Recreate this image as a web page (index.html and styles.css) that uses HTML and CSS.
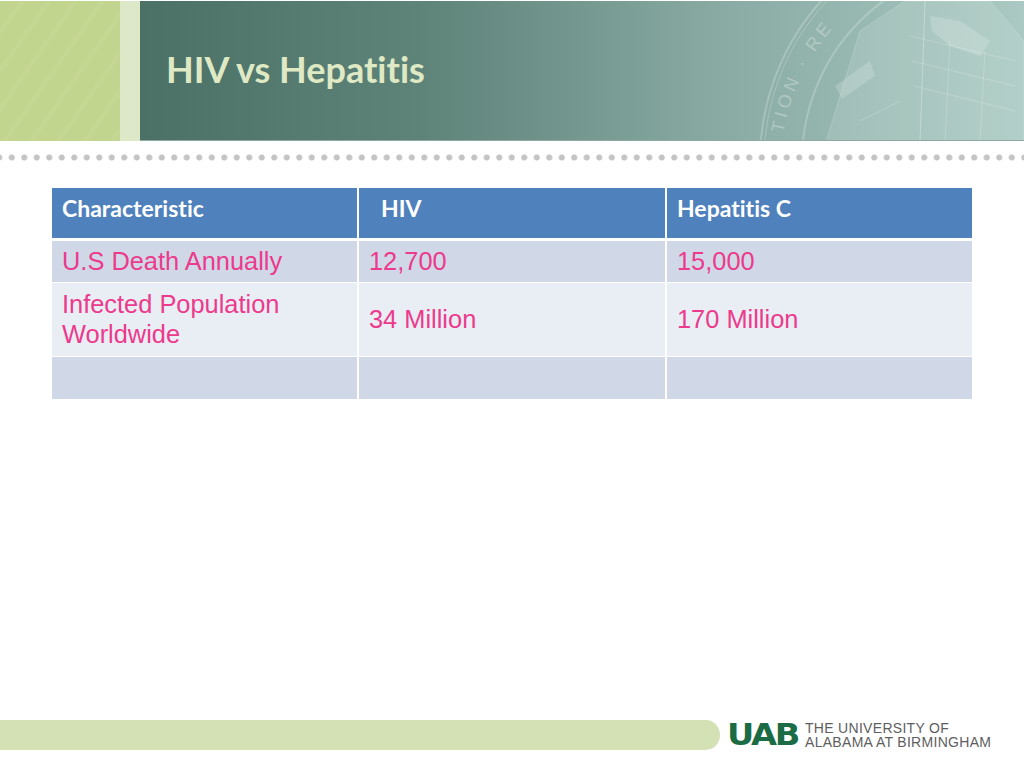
FILE: index.html
```html
<!DOCTYPE html>
<html lang="en">
<head>
<meta charset="utf-8">
<title>HIV vs Hepatitis</title>
<link rel="stylesheet" href="styles.css">
</head>
<body>
<div class="page">
  <header class="banner">
    <div class="banner-green"></div>
    <div class="banner-strip"></div>
    <div class="banner-main">
      <h1 class="title">HIV vs Hepatitis</h1>
      <svg class="seal" viewBox="680 0 344 141" width="344" height="141" aria-hidden="true">
        <defs>
          <path id="sealArc" d="M 780 170 A 220 220 0 0 1 1000 -50"/>
        </defs>
        <g fill="none" stroke="#ffffff" stroke-opacity="0.22" stroke-width="2">
          <circle cx="1000" cy="160" r="240"/>
          <circle cx="1000" cy="160" r="236" stroke-width="1"/>
          <circle cx="1000" cy="160" r="198"/>
        </g>
        <text class="seal-text"><textPath href="#sealArc" startOffset="11%">TION · RE</textPath></text>
        <g fill="#ffffff" fill-opacity="0.12" stroke="#ffffff" stroke-opacity="0.18" stroke-width="1">
          <polygon points="826,141 860,30 905,0 925,0 920,141"/>
          <polygon points="920,141 925,0 990,0 1024,40 1024,141"/>
        </g>
        <g fill="none" stroke="#ffffff" stroke-opacity="0.2" stroke-width="1">
          <line x1="910" y1="35" x2="1015" y2="60"/>
          <line x1="912" y1="60" x2="1015" y2="85"/>
          <line x1="914" y1="85" x2="1015" y2="110"/>
          <line x1="950" y1="40" x2="945" y2="141"/>
          <line x1="985" y1="50" x2="980" y2="141"/>
          <line x1="860" y1="120" x2="900" y2="100"/>
        </g>
        <g fill="#ffffff" fill-opacity="0.18">
          <polygon points="835,85 870,60 875,75 842,98"/>
          <polygon points="930,15 960,20 990,40 980,55 950,45 932,30"/>
        </g>
      </svg>
    </div>
  </header>

  <div class="dots"></div>

  <table class="data">
    <colgroup>
      <col class="c1"><col class="c2"><col class="c3">
    </colgroup>
    <thead>
      <tr>
        <th>Characteristic</th>
        <th class="indent">HIV</th>
        <th>Hepatitis C</th>
      </tr>
    </thead>
    <tbody>
      <tr class="odd short">
        <td>U.S Death Annually</td>
        <td>12,700</td>
        <td>15,000</td>
      </tr>
      <tr class="even tall">
        <td>Infected Population<br>Worldwide</td>
        <td>34 Million</td>
        <td>170 Million</td>
      </tr>
      <tr class="odd short">
        <td></td>
        <td></td>
        <td></td>
      </tr>
    </tbody>
  </table>

  <footer class="footer">
    <div class="band"></div>
    <div class="logo">
      <span class="logo-mark">UAB</span>
      <span class="logo-name">THE UNIVERSITY OF<br>ALABAMA AT BIRMINGHAM</span>
    </div>
  </footer>
</div>
</body>
</html>
```

FILE: styles.css
```css
html, body {
  margin: 0;
  padding: 0;
  background: #ffffff;
}

body {
  font-family: "Liberation Sans", Arial, sans-serif;
}

.page {
  display: flex;
  flex-direction: column;
  height: 768px;
  overflow: hidden;
}

/* ---------- banner ---------- */
.banner {
  display: flex;
  height: 140px;
  margin-top: 1px;
}

.banner-green {
  width: 120px;
  background-color: #c2d58e;
  background-image: repeating-linear-gradient(125deg,
      rgba(255,255,255,0) 0px,
      rgba(255,255,255,0) 14px,
      rgba(255,255,255,0.06) 18px,
      rgba(255,255,255,0) 22px);
}

.banner-strip {
  width: 20px;
  background: #dce8c7;
}

.banner-main {
  flex: 1;
  position: relative;
  overflow: hidden;
  background: linear-gradient(90deg, #4b7066 0%, #5e8379 32%, #89aba3 66%, #a9c9c2 100%);
  border-bottom: 1px solid #8ea8a2;
  box-sizing: border-box;
}

.title {
  position: relative;
  z-index: 1;
  margin: 0;
  padding: 47px 0 0 26px;
  font-family: Lato, "Open Sans", sans-serif;
  font-weight: 700;
  font-size: 36px;
  line-height: 1.2;
  color: #dfe9c4;
  font-variant-ligatures: none;
}

.seal {
  position: absolute;
  top: 0;
  right: 0;
}

.seal-text {
  font-family: "Liberation Sans", sans-serif;
  font-size: 18px;
  letter-spacing: 4px;
  fill: #ffffff;
  fill-opacity: 0.3;
}

/* ---------- dotted rule ---------- */
.dots {
  height: 7px;
  margin-top: 13px;
  background-image: radial-gradient(circle, #c4c4c4 2.7px, rgba(196,196,196,0) 3.4px);
  background-size: 12.5px 7px;
  background-position: 5.5px 0;
  background-repeat: repeat-x;
}

/* ---------- table ---------- */
.data {
  margin: 27px 0 0 52px;
  width: 920px;
  table-layout: fixed;
  border-collapse: collapse;
}

.c1 { width: 306px; }
.c2 { width: 308px; }
.c3 { width: 306px; }

.data th {
  height: 51px;
  box-sizing: border-box;
  padding: 7px 10px 0;
  vertical-align: top;
  text-align: left;
  background: #4f81bd;
  color: #ffffff;
  font-family: Lato, "Open Sans", sans-serif;
  font-weight: 700;
  font-size: 23px;
  line-height: 26px;
  border-bottom: 3px solid #ffffff;
  font-variant-ligatures: none;
}

.data th + th,
.data td + td {
  border-left: 2px solid #ffffff;
}

.data th.indent {
  padding-left: 22px;
}

.data td {
  padding: 0 10px;
  vertical-align: middle;
  color: #ec3a8c;
  font-size: 25.4px;
  line-height: 30px;
  border-top: 1px solid #ffffff;
}

.data tr.odd td { background: #d0d8e8; }
.data tr.even td { background: #e9edf4; }
.data tr.short td { height: 43px; box-sizing: border-box; }
.data tr.tall td { height: 74px; box-sizing: border-box; }

/* ---------- footer ---------- */
.footer {
  margin-top: auto;
  margin-bottom: 18px;
  display: flex;
  align-items: center;
  height: 30px;
}

.band {
  width: 720px;
  height: 30px;
  background: #d3e1b4;
  border-radius: 0 14px 14px 0 / 0 15px 15px 0;
}

.logo {
  display: flex;
  align-items: center;
  margin-left: 7px;
}

.logo-mark {
  font-family: "DejaVu Sans", sans-serif;
  font-weight: 700;
  font-size: 30px;
  line-height: 28px;
  letter-spacing: -2px;
  color: #1b6b45;
  display: inline-block;
  transform: scaleX(1.12);
  transform-origin: left center;
  width: 78px;
}

.logo-name {
  font-family: "Liberation Sans", sans-serif;
  font-size: 14px;
  line-height: 14px;
  letter-spacing: 0.3px;
  color: #5e5e5e;
}
```
